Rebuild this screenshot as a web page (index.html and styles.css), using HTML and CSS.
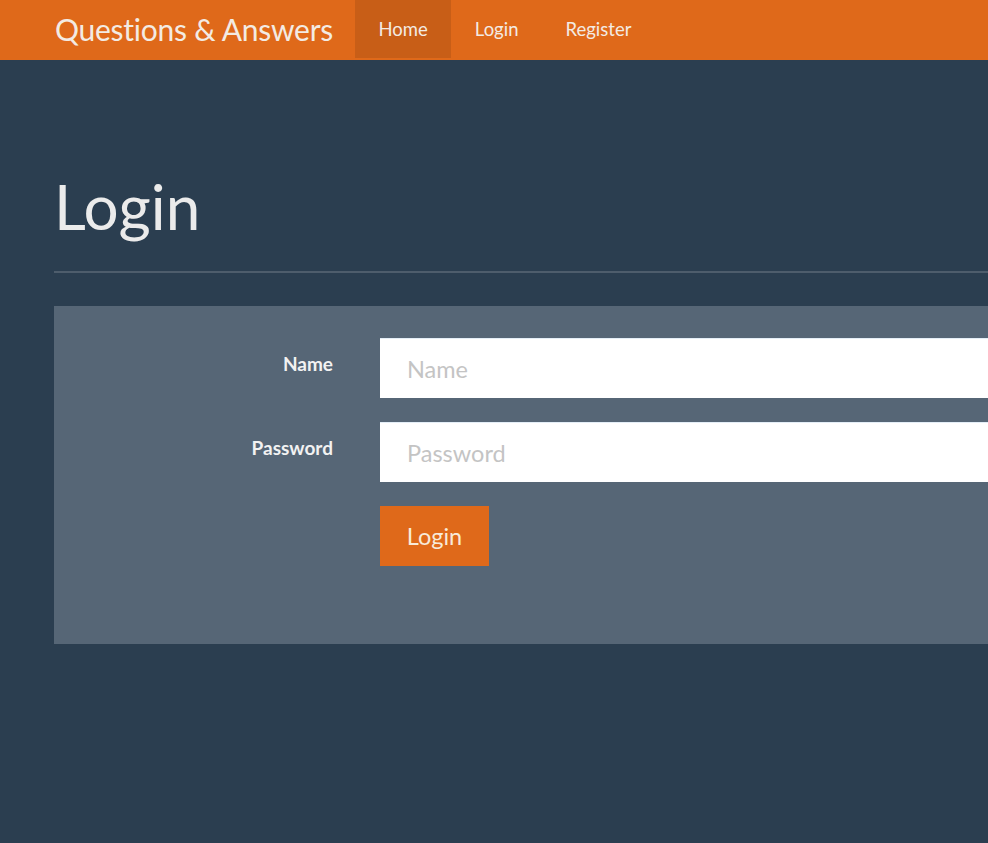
FILE: index.html
```html
<!DOCTYPE html>
<html>
<head>
<meta charset="utf-8">
<link rel="stylesheet" href="styles.css">
</head>
<body>
<nav class="navbar">
  <div class="nav-inner">
    <a class="brand" href="#">Questions &amp; Answers</a>
    <ul class="nav">
      <li class="active"><a href="#">Home</a></li>
      <li><a href="#">Login</a></li>
      <li><a href="#">Register</a></li>
    </ul>
  </div>
</nav>
<main class="container">
  <div class="page-header">
    <h1>Login</h1>
  </div>
  <form class="well">
    <div class="row">
      <label class="label" for="name">Name</label>
      <input class="input" id="name" type="text" placeholder="Name">
    </div>
    <div class="row">
      <label class="label" for="pw">Password</label>
      <input class="input" id="pw" type="password" placeholder="Password">
    </div>
    <div class="row">
      <span></span>
      <div><button class="btn" type="button">Login</button></div>
    </div>
  </form>
</main>
</body>
</html>
```
FILE: styles.css
```css
html, body {
  margin: 0;
  padding: 0;
  overflow: hidden;
}
body {
  background: #2b3e50;
  font-family: Lato, "Open Sans", sans-serif;
  color: #ebebeb;
  width: 988px;
  height: 843px;
}
.navbar {
  background: #df691a;
  height: 60px;
}
.nav-inner {
  display: flex;
  align-items: stretch;
  height: 60px;
  padding-left: 55px;
}
.brand {
  color: #f3ebe3;
  text-decoration: none;
  font-size: 30px;
  line-height: 58px;
  padding-right: 22px;
  letter-spacing: -0.25px;
}
.nav {
  display: flex;
  list-style: none;
  margin: 0;
  padding: 0;
}
.nav li a {
  display: block;
  color: #f3ebe3;
  text-decoration: none;
  font-size: 18.5px;
  line-height: 58px;
  padding: 0 23.5px;
}
.nav li.active a {
  background: #c85e17;
}
.container {
  padding-left: 55px;
  width: 1400px;
}
.page-header {
  padding-top: 108px;
  padding-bottom: 27px;
  border-bottom: 2px solid #4e5d6c;
  margin-bottom: 33px;
  margin-left: -1px;
}
h1 {
  margin: 0;
  font-size: 62px;
  font-weight: 400;
  line-height: 76px;
  color: #ebebeb;
}
.well {
  background: #566676;
  margin-left: -1px;
  padding: 32px 0 78px;
  display: flex;
  flex-direction: column;
  gap: 24px;
}
.row {
  display: grid;
  grid-template-columns: 279px 1fr;
  column-gap: 47px;
}
.label {
  text-align: right;
  font-weight: 700;
  font-size: 19px;
  padding-top: 14px;
  color: #f2f2f2;
}
.input {
  height: 60px;
  box-sizing: border-box;
  border: none;
  border-top: 1px solid #e4eef7;
  background: #fff;
  font-family: Lato, "Open Sans", sans-serif;
  font-size: 23.5px;
  padding: 0 27px;
  margin: 0;
  outline: none;
}
.input::placeholder {
  color: #c4c4c4;
}
.btn {
  height: 60px;
  width: 109px;
  background: #df691a;
  color: #f8ead9;
  border: none;
  font-family: Lato, "Open Sans", sans-serif;
  font-size: 23.5px;
  padding: 0;
  margin: 0;
}
```
